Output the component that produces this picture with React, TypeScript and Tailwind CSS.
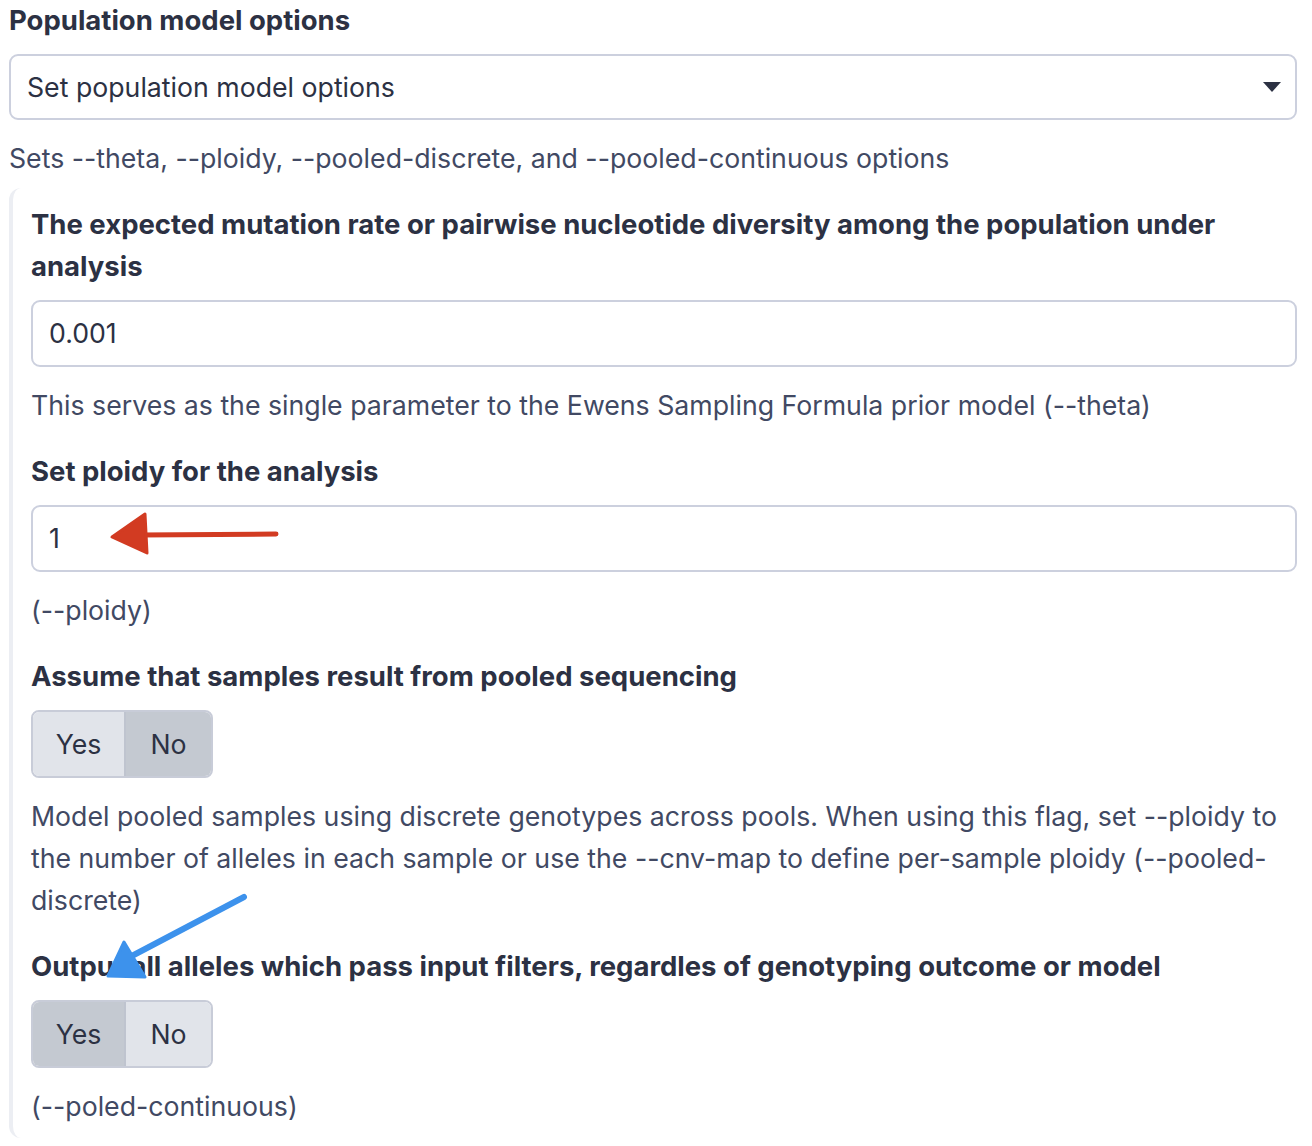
import React from "react";

type Choice = "yes" | "no";

const font = { fontFamily: "Inter, 'Noto Sans', sans-serif" };

function Field({ label, children, help }: { label: string; children: React.ReactNode; help: string }) {
  return (
    <div>
      <div className="font-bold text-[27.5px] text-[#2c3143] leading-[42px]">{label}</div>
      <div className="mt-[13px]">{children}</div>
      <div className="mt-[17px] text-[#414963] leading-[42px]">{help}</div>
    </div>
  );
}

function TextInput({ value }: { value: string }) {
  return (
    <div className="h-[67px] border-2 border-[#ccd0de] rounded-[9px] flex items-center px-[16px] text-[#2c3143]">
      {value}
    </div>
  );
}

function Toggle({ value }: { value: Choice }) {
  const on = "bg-[#c4c9d1]";
  const off = "bg-[#e1e4ea]";
  return (
    <div className="inline-flex h-[68px] rounded-[8px] border-2 border-[#c8ccd8] overflow-hidden text-[#2c3143]">
      <div className={`${value === "yes" ? on : off} w-[93px] flex items-center justify-center border-r-2 border-[#bfc4cf]`}>Yes</div>
      <div className={`${value === "no" ? on : off} w-[85px] flex items-center justify-center`}>No</div>
    </div>
  );
}

export default function App() {
  return (
    <div className="relative w-[1312px] h-[1146px] bg-white text-[26.7px] overflow-hidden" style={font}>
      <div className="pl-[9px] pr-[15px]">
        <div className="font-bold text-[27.5px] text-[#2c3143] leading-[40px]">Population model options</div>
        <div className="mt-[14px] h-[66px] border-2 border-[#ccd0de] rounded-[9px] flex items-center justify-between pl-[16px] pr-[14px] text-[#2c3143]">
          <span>Set population model options</span>
          <svg width="18" height="10" viewBox="0 0 18 10">
            <path d="M0 0 L18 0 L9 10 Z" fill="#2c3143" />
          </svg>
        </div>
        <div className="mt-[17px] text-[#414963] leading-[42px]">
          Sets --theta, --ploidy, --pooled-discrete, and --pooled-continuous options
        </div>

        <div className="mt-[9px] border-l-4 border-[#eceef3] rounded-l-[12px] pl-[18px] pt-[15px] pb-[11px] flex flex-col gap-[24px]">
          <Field
            label="The expected mutation rate or pairwise nucleotide diversity among the population under analysis"
            help="This serves as the single parameter to the Ewens Sampling Formula prior model (--theta)"
          >
            <TextInput value="0.001" />
          </Field>
          <Field label="Set ploidy for the analysis" help="(--ploidy)">
            <TextInput value="1" />
          </Field>
          <Field
            label="Assume that samples result from pooled sequencing"
            help="Model pooled samples using discrete genotypes across pools. When using this flag, set --ploidy to the number of alleles in each sample or use the --cnv-map to define per-sample ploidy (--pooled-discrete)"
          >
            <Toggle value="no" />
          </Field>
          <Field
            label="Output all alleles which pass input filters, regardles of genotyping outcome or model"
            help="(--poled-continuous)"
          >
            <Toggle value="yes" />
          </Field>
        </div>
      </div>

      {/* hand-drawn annotations */}
      <svg className="absolute left-0 top-0 pointer-events-none" width="1312" height="1146">
        <g fill="#d23b22" stroke="#d23b22" strokeLinecap="round" strokeLinejoin="round">
          <line x1="140" y1="535" x2="276" y2="534" strokeWidth="5" />
          <path d="M112 537 L145 514 L147 553 Z" strokeWidth="3" />
        </g>
        <g fill="#3d92ec" stroke="#3d92ec" strokeLinecap="round" strokeLinejoin="round">
          <line x1="128" y1="958" x2="244" y2="897" strokeWidth="6" />
          <path d="M108 976 L124 942 L145 977 Z" strokeWidth="3" />
        </g>
      </svg>
    </div>
  );
}
